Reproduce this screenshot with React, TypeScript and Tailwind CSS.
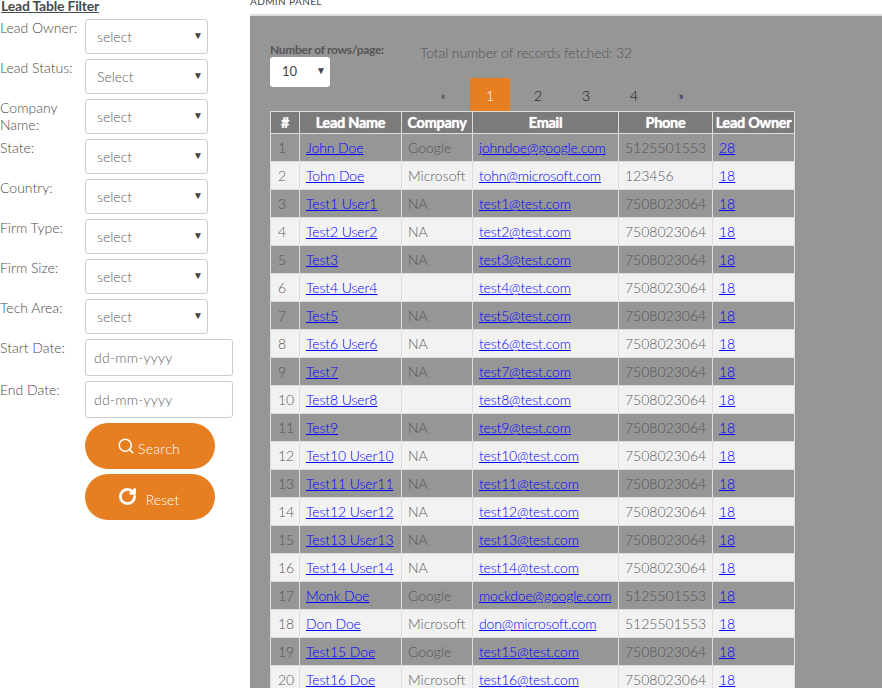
import { Search, RotateCw } from 'lucide-react';

const filters = [
    { label: 'Lead Owner:', value: 'select' },
    { label: 'Lead Status:', value: 'Select' },
    { label: 'Company Name:', value: 'select' },
    { label: 'State:', value: 'select' },
    { label: 'Country:', value: 'select' },
    { label: 'Firm Type:', value: 'select' },
    { label: 'Firm Size:', value: 'select' },
    { label: 'Tech Area:', value: 'select' },
];

const rows = [
    ['John Doe', 'Google', 'johndoe@google.com', '5125501553', '28'],
    ['Tohn Doe', 'Microsoft', 'tohn@microsoft.com', '123456', '18'],
    ['Test1 User1', 'NA', 'test1@test.com', '7508023064', '18'],
    ['Test2 User2', 'NA', 'test2@test.com', '7508023064', '18'],
    ['Test3', 'NA', 'test3@test.com', '7508023064', '18'],
    ['Test4 User4', '', 'test4@test.com', '7508023064', '18'],
    ['Test5', 'NA', 'test5@test.com', '7508023064', '18'],
    ['Test6 User6', 'NA', 'test6@test.com', '7508023064', '18'],
    ['Test7', 'NA', 'test7@test.com', '7508023064', '18'],
    ['Test8 User8', '', 'test8@test.com', '7508023064', '18'],
    ['Test9', 'NA', 'test9@test.com', '7508023064', '18'],
    ['Test10 User10', 'NA', 'test10@test.com', '7508023064', '18'],
    ['Test11 User11', 'NA', 'test11@test.com', '7508023064', '18'],
    ['Test12 User12', 'NA', 'test12@test.com', '7508023064', '18'],
    ['Test13 User13', 'NA', 'test13@test.com', '7508023064', '18'],
    ['Test14 User14', 'NA', 'test14@test.com', '7508023064', '18'],
    ['Monk Doe', 'Google', 'mockdoe@google.com', '5125501553', '18'],
    ['Don Doe', 'Microsoft', 'don@microsoft.com', '5125501553', '18'],
    ['Test15 Doe', 'Google', 'test15@test.com', '7508023064', '18'],
    ['Test16 Doe', 'Microsoft', 'test16@test.com', '7508023064', '18'],
];

function Caret() {
    return <span className="text-[10px] leading-none text-[#444] mt-[-4px]">▼</span>;
}

function FilterSelect({ value }: { value: string }) {
    return (
        <div className="w-[123px] h-[35px] border border-[#ccc] rounded-[3px] bg-white flex items-center justify-between pl-[11px] pr-[4px] text-[14px] text-[#5c5c5c]">
            <span>{value}</span>
            <Caret />
        </div>
    );
}

function DateInput() {
    return (
        <div className="w-[148px] h-[37px] border border-[#ccc] rounded-[3px] bg-white flex items-center pl-[8px] text-[14px] tracking-[0.2px] text-[#666]">
            dd-mm-yyyy
        </div>
    );
}

export default function App() {
    return (
        <div className="w-[882px] h-[688px] overflow-hidden flex bg-white font-['Lato',sans-serif] font-light text-[#4a4a4a]">
            <aside className="w-[250px] shrink-0">
                <h2 className="text-[14px] leading-[12px] font-bold underline tracking-[-0.2px] text-[#4a4a4a] ml-px">Lead Table Filter</h2>
                <div className="mt-[7px] flex flex-col gap-[5px]">
                    {filters.map(f => (
                        <div key={f.label} className="flex">
                            <label className="w-[85px] text-[14px] leading-[17px]">{f.label}</label>
                            <FilterSelect value={f.value} />
                        </div>
                    ))}
                    <div className="flex">
                        <label className="w-[85px] text-[14px] leading-[17px]">Start Date:</label>
                        <DateInput />
                    </div>
                    <div className="flex">
                        <label className="w-[85px] text-[14px] leading-[17px]">End Date:</label>
                        <DateInput />
                    </div>
                </div>
                <div className="ml-[85px] mt-[5px] flex flex-col gap-[5px]">
                    <button className="w-[130px] h-[46px] rounded-[23px] bg-[#e67e22] text-white text-[14px] flex items-center justify-center gap-[3px]">
                        <Search size={18} strokeWidth={2} className="ml-[-3px] mt-[-1px]" />
                        <span className="mt-[4px] tracking-[0.3px]">Search</span>
                    </button>
                    <button className="w-[130px] h-[46px] rounded-[23px] bg-[#e67e22] text-white text-[14px] flex items-center justify-center gap-[9px]">
                        <RotateCw size={19} strokeWidth={3.5} className="ml-[-3px] mt-[-1px]" />
                        <span className="mt-[4px]">Reset</span>
                    </button>
                </div>
            </aside>
            <main className="flex-1 flex flex-col">
                <div className="h-[16px] shrink-0 bg-white border-b-2 border-[#ddd] text-[10px] leading-[3px] tracking-[0.4px] font-normal text-[#444]">ADMIN PANEL</div>
                <div className="flex-1 bg-[#969696] pl-[20px]">
                    <div className="flex h-[62px] pt-[27px]">
                        <div className="w-[150px]">
                            <div className="text-[12px] leading-[14px] font-bold tracking-[-0.3px] text-[#555]">Number of rows/page:</div>
                            <div className="w-[60px] h-[30px] bg-white rounded-[3px] flex items-center justify-between pl-[12px] pr-[4px] text-[13px] font-normal text-[#444]">
                                <span>10</span>
                                <Caret />
                            </div>
                        </div>
                        <div className="text-[14px] leading-[17px] tracking-[-0.12px] text-[#555] mt-[1px]">Total number of records fetched: 32</div>
                    </div>
                    <div className="ml-[150px] h-[33px] flex items-stretch text-[14px] leading-[35px] text-center">
                        <span className="w-[46px] text-[11px] font-normal text-[#444]">«</span>
                        <span className="w-[40px] ml-[4px] bg-[#e67e22] text-white">1</span>
                        <span className="w-[48px] ml-[4px] text-[#111]">2</span>
                        <span className="w-[48px] text-[#111]">3</span>
                        <span className="w-[48px] text-[#111]">4</span>
                        <span className="w-[46px] text-[11px] font-normal text-[#224]">»</span>
                    </div>
                    <table className="w-[524px] table-fixed border-collapse text-[14px]">
                        <colgroup>
                            <col className="w-[29px]" />
                            <col className="w-[102px]" />
                            <col className="w-[71px]" />
                            <col className="w-[146px]" />
                            <col className="w-[94px]" />
                            <col className="w-[82px]" />
                        </colgroup>
                        <thead>
                            <tr className="h-[22px] bg-[#7b7b7b] text-white text-[14.5px] font-bold leading-none [text-shadow:0_0_1px_#fff]">
                                {['#', 'Lead Name', 'Company', 'Email', 'Phone', 'Lead Owner'].map(h => (
                                    <th key={h} className="border border-[#ddd] p-0 pt-[2px] text-center whitespace-nowrap tracking-[-0.3px]">{h}</th>
                                ))}
                            </tr>
                        </thead>
                        <tbody>
                            {rows.map((r, i) => (
                                <tr key={i} className={i % 2 === 0 ? 'h-[28px] bg-[#969696] text-[#555]' : 'h-[28px] bg-[#f2f2f2] text-[#5c5c5c]'}>
                                    <td className="border border-[#ddd] pl-[7px] py-0">{i + 1}</td>
                                    <td className="border border-[#ddd] pl-[6px] py-0 whitespace-nowrap"><a href="#" className="text-[#0000ff] underline tracking-[-0.1px]">{r[0]}</a></td>
                                    <td className="border border-[#ddd] pl-[6px] py-0">{r[1]}</td>
                                    <td className="border border-[#ddd] pl-[6px] py-0 whitespace-nowrap"><a href="#" className="text-[#0000ff] underline tracking-[-0.17px]">{r[2]}</a></td>
                                    <td className="border border-[#ddd] pl-[6px] py-0">{r[3]}</td>
                                    <td className="border border-[#ddd] pl-[6px] py-0"><a href="#" className="text-[#0000ff] underline">{r[4]}</a></td>
                                </tr>
                            ))}
                        </tbody>
                    </table>
                </div>
            </main>
        </div>
    );
}
